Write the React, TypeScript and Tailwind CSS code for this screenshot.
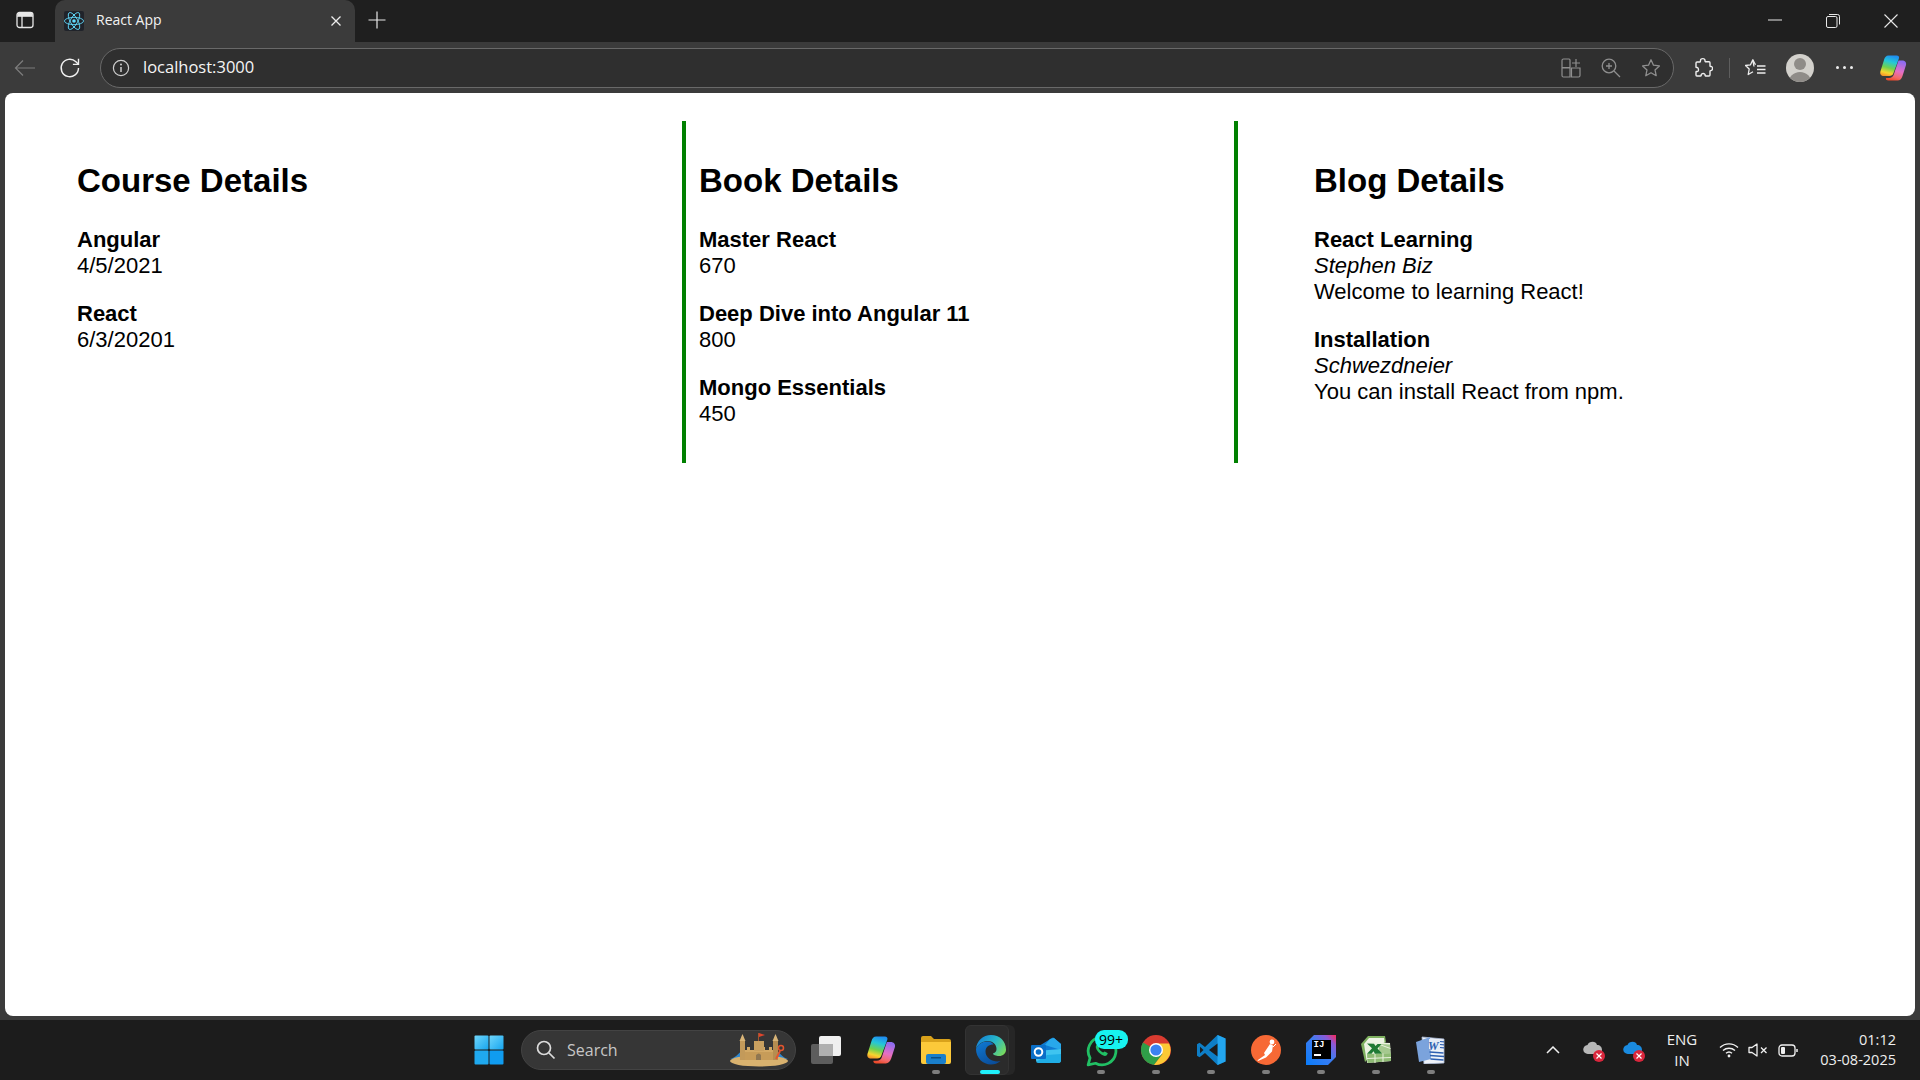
import React from "react";

const Chrome = ({ children, className = "" }: { children?: React.ReactNode; className?: string }) => (
  <div className={`flex items-center justify-center shrink-0 ${className}`}>{children}</div>
);

const ReactLogo = () => (
  <div className="w-[20px] h-[20px] bg-[#20232a] rounded-[2px] flex items-center justify-center">
    <svg width="20" height="20" viewBox="-11.5 -11.5 23 23" fill="none" stroke="#61dafb" strokeWidth="1">
      <circle r="2.05" fill="#61dafb" stroke="none" />
      <ellipse rx="11" ry="4.2" />
      <ellipse rx="11" ry="4.2" transform="rotate(60)" />
      <ellipse rx="11" ry="4.2" transform="rotate(120)" />
    </svg>
  </div>
);

const CopilotIcon = ({ size = 28, id }: { size?: number; id: string }) => (
  <svg width={size} height={size} viewBox="0 0 28 28">
    <defs>
      <linearGradient id={`${id}A`} x1="0.6" y1="0" x2="0.35" y2="1">
        <stop offset="0" stopColor="#1f8ff0" />
        <stop offset="0.3" stopColor="#25c7d8" />
        <stop offset="0.6" stopColor="#6fd24e" />
        <stop offset="0.85" stopColor="#f6d52f" />
        <stop offset="1" stopColor="#f79a2a" />
      </linearGradient>
      <linearGradient id={`${id}B`} x1="0.6" y1="0" x2="0.3" y2="1">
        <stop offset="0" stopColor="#8d6cf0" />
        <stop offset="0.5" stopColor="#e56fc4" />
        <stop offset="0.8" stopColor="#f26a6a" />
        <stop offset="1" stopColor="#ee4a2a" />
      </linearGradient>
    </defs>
    <path d="M9.500 1.500h8c2 0 3 1.300 2.400 3L14.500 19c-.8 2.300-2 3-4 3H5c-3 0-4.300-2-3.600-4.500L5 6c.8-3 2.200-4.500 4.500-4.500z" fill={`url(#${id}A)`} />
    <path d="M19.500 6.500H23c3 0 4.700 2 4 4.600L23.500 22c-1 3-2.600 4.500-5 4.500H9.500c-2 0-3-1.200-2.500-2.500h3c2.500 0 4-1.200 4.800-3.500z" fill={`url(#${id}B)`} />
  </svg>
);

const StarPath = "M10 1.800l2.500 5.400 5.900.7-4.400 4 1.200 5.800L10 14.800l-5.200 2.900L6 11.900l-4.400-4 5.900-.7z";

const TabBar = () => (
  <div className="h-[42px] bg-[#1f1f1f] flex items-stretch shrink-0">
    <Chrome className="w-[55px] pr-[6px] pb-[2px]">
      <svg width="18" height="18" viewBox="0 0 18 18" fill="none" stroke="#e8e8e8" strokeWidth="1.300">
        <rect x="1" y="1.500" width="16" height="15" rx="2.500" />
        <path d="M1 5.200h16M6 5.200v11.300" />
        <path d="M1.500 3.500q0-1.800 2-1.800h11q2 0 2 1.800v1.700h-15z" fill="#e8e8e8" stroke="none" />
      </svg>
    </Chrome>
    <div className="w-[300px] bg-[#3b3b3b] rounded-t-[10px] flex items-center pl-[9px] pr-[13px]">
      <ReactLogo />
      <span className="ml-[12px] text-[14px] leading-[20px] text-[#f2f2f2] flex-1 font-['Open_Sans',sans-serif] pb-[2px]">React App</span>
      <svg width="12" height="12" viewBox="0 0 12 12" stroke="#ededed" strokeWidth="1.300">
        <path d="M1.500 1.500l9 9M10.500 1.500l-9 9" />
      </svg>
    </div>
    <Chrome className="w-[44px] pb-[2px]">
      <svg width="18" height="18" viewBox="0 0 18 18" stroke="#e8e8e8" strokeWidth="1.200">
        <path d="M9 0.500v17M0.500 9h17" />
      </svg>
    </Chrome>
    <div className="flex-1" />
    <Chrome className="w-[58px] pb-[2px]">
      <svg width="14" height="2" viewBox="0 0 14 2"><path d="M0 1h14" stroke="#e8e8e8" strokeWidth="1" /></svg>
    </Chrome>
    <Chrome className="w-[58px]">
      <svg width="14" height="14" viewBox="0 0 14 14" fill="none" stroke="#e8e8e8" strokeWidth="1">
        <rect x="0.500" y="2.500" width="10.500" height="11" rx="1.500" />
        <path d="M3 .5h8.500q2 0 2 2v8" />
      </svg>
    </Chrome>
    <Chrome className="w-[58px]">
      <svg width="14" height="14" viewBox="0 0 14 14" stroke="#e8e8e8" strokeWidth="1.100">
        <path d="M.5.5l13 13M13.500.5l-13 13" />
      </svg>
    </Chrome>
  </div>
);

const Toolbar = () => (
  <div className="h-[51px] bg-[#3b3b3b] flex items-center shrink-0">
    <Chrome className="w-[49px]">
      <svg width="22" height="18" viewBox="0 0 22 18" fill="none" stroke="#7d7d7d" strokeWidth="1.200">
        <path d="M21 9H1.500M9 1.500L1.500 9 9 16.500" />
      </svg>
    </Chrome>
    <Chrome className="w-[42px]">
      <svg width="22" height="22" viewBox="0 0 22 22" fill="none" stroke="#f0f0f0" strokeWidth="1.400">
        <path d="M19.500 11a8.700 8.700 0 1 1-2.600-6.200l2.300 2.300" />
        <path d="M19.500 1.800v5.600h-5.600" />
      </svg>
    </Chrome>
    <div className="ml-[9px] w-[1574px] h-[40px] bg-[#2f2f2f] border border-[#696969] rounded-full flex items-center pl-[11px] pr-[12px]">
      <svg width="18" height="18" viewBox="0 0 18 18" fill="none" stroke="#cfcfcf" strokeWidth="1.200">
        <circle cx="9" cy="9" r="7.600" />
        <path d="M9 8v5" strokeWidth="1.500" />
        <circle cx="9" cy="5.400" r="1" fill="#cfcfcf" stroke="none" />
      </svg>
      <span className="ml-[13px] text-[16.500px] text-[#f5f5f5] flex-1 font-['Open_Sans',sans-serif]">localhost:3000</span>
      <div className="flex items-center gap-[20px]">
        <svg width="20" height="20" viewBox="0 0 20 20" fill="none" stroke="#8f8f8f" strokeWidth="1.200">
          <path d="M1 2.500q0-1.500 1.500-1.500H8q1 0 1 1v7.500H1zM1 10h8v9H2.500Q1 19 1 17.500zM10.500 10H19v7.500q0 1.500-1.500 1.500h-7z" />
          <path d="M15 1v8M11 5h8" />
        </svg>
        <svg width="20" height="20" viewBox="0 0 20 20" fill="none" stroke="#8f8f8f" strokeWidth="1.300">
          <circle cx="8" cy="8" r="6.800" />
          <path d="M13 13l6 6M8 5v6M5 8h6" />
        </svg>
        <svg width="20" height="20" viewBox="0 0 20 20" fill="none" stroke="#8f8f8f" strokeWidth="1.300">
          <path d={StarPath} strokeLinejoin="round" />
        </svg>
      </div>
    </div>
    <Chrome className="w-[55px] pl-[3px]">
      <svg width="20" height="21" viewBox="0 0 20 21" fill="none" stroke="#eeeeee" strokeWidth="1.400" strokeLinejoin="round">
        <path d="M7.500 3.500C7.500 1 12 1 12 3.500c0 .6 0 1 .3 1.200H16c.6 0 1 .4 1 1v3.200c0 .4.4.6.8.5 2-.5 2.600 4.400-.1 4.200-.4 0-.7.2-.7.6V18c0 .6-.4 1-1 1h-3.400c-.4 0-.6-.4-.5-.8.5-2.200-4.400-2.200-3.900 0 .1.4-.1.8-.5.8H3.800c-.6 0-.8-.4-.8-1v-3c0-.5.5-.7.9-.5C6 15.400 6 10 3.800 10.500c-.4.100-.8 0-.8-.5V6c0-.6.4-1 1-1h3c.4 0 .5-.8.5-1.500z" />
      </svg>
    </Chrome>
    <div className="w-px h-[20px] bg-[#5e5e5e]" />
    <Chrome className="w-[51px]">
      <svg width="21" height="20" viewBox="0 0 21 20" fill="none" stroke="#eeeeee" strokeWidth="1.300">
        <path d="M9 8.500L7.800 1.800 5.500 6.800l-5 .7 3.700 3.500-1 5.500 4.800-2.700" strokeLinejoin="round" />
        <path d="M7.800 1.800l2.700 5" />
        <path d="M12 8h8.500M12 11.500h8.500M12 15h8.500" />
      </svg>
    </Chrome>
    <Chrome className="w-[38px]">
      <div className="w-[28px] h-[28px] rounded-full bg-[#d3d1cc] overflow-hidden flex flex-col items-center">
        <div className="w-[12px] h-[12px] rounded-full bg-[#8f8c88] mt-[4px] shrink-0" />
        <div className="w-[24px] h-[14px] rounded-t-full bg-[#8f8c88] mt-[2px] shrink-0" />
      </div>
    </Chrome>
    <Chrome className="w-[50px]">
      <div className="flex gap-[4px]">
        <div className="w-[3px] h-[3px] rounded-full bg-[#ececec]" />
        <div className="w-[3px] h-[3px] rounded-full bg-[#ececec]" />
        <div className="w-[3px] h-[3px] rounded-full bg-[#ececec]" />
      </div>
    </Chrome>
    <Chrome className="w-[47px]">
      <CopilotIcon size={28} id="cpTop" />
    </Chrome>
  </div>
);

const Entry = ({ lines }: { lines: { t: string; k?: "b" | "i" }[] }) => (
  <div className="mb-[22px]">
    {lines.map((l) => (
      <div
        key={l.t}
        className={`h-[26px] leading-[26px] ${l.k === "b" ? "font-bold" : ""} ${l.k === "i" ? "italic" : ""}`}
      >
        {l.t}
      </div>
    ))}
  </div>
);

const Heading = ({ children }: { children: React.ReactNode }) => (
  <h2 className="text-[33px] font-bold leading-[39px] mt-[40px] mb-[27px]">{children}</h2>
);

const Content = () => (
  <div className="flex-1 bg-[#3b3b3b] px-[5px] pb-[4px] min-h-0">
    <div className="h-full bg-white rounded-[8px] text-black flex items-start pt-[28px] font-['Liberation_Sans',Arial,sans-serif] text-[22px]">
      <section className="w-[677px] pl-[72px]">
        <Heading>Course Details</Heading>
        <Entry lines={[{ t: "Angular", k: "b" }, { t: "4/5/2021" }]} />
        <Entry lines={[{ t: "React", k: "b" }, { t: "6/3/20201" }]} />
      </section>
      <section className="w-[556px] h-[342px] border-x-4 border-[#008000] pl-[13px]">
        <Heading>Book Details</Heading>
        <Entry lines={[{ t: "Master React", k: "b" }, { t: "670" }]} />
        <Entry lines={[{ t: "Deep Dive into Angular 11", k: "b" }, { t: "800" }]} />
        <Entry lines={[{ t: "Mongo Essentials", k: "b" }, { t: "450" }]} />
      </section>
      <section className="pl-[76px]">
        <Heading>Blog Details</Heading>
        <Entry lines={[{ t: "React Learning", k: "b" }, { t: "Stephen Biz", k: "i" }, { t: "Welcome to learning React!" }]} />
        <Entry lines={[{ t: "Installation", k: "b" }, { t: "Schwezdneier", k: "i" }, { t: "You can install React from npm." }]} />
      </section>
    </div>
  </div>
);

const WindowsLogo = () => (
  <svg width="30" height="30" viewBox="0 0 30 30">
    <defs>
      <linearGradient id="winA" x1="0" y1="0" x2="1" y2="1">
        <stop offset="0" stopColor="#6fd6fb" />
        <stop offset="1" stopColor="#17a5ef" />
      </linearGradient>
    </defs>
    <rect x="0.500" y="0.500" width="14" height="14" rx="1" fill="url(#winA)" />
    <rect x="15.500" y="0.500" width="14" height="14" rx="1" fill="url(#winA)" />
    <rect x="0.500" y="15.500" width="14" height="14" rx="1" fill="#1fa9ef" />
    <rect x="15.500" y="15.500" width="14" height="14" rx="1" fill="#109cf0" />
  </svg>
);

const Castle = () => (
  <svg width="60" height="34" viewBox="0 0 60 34">
    <path d="M1 26c6-1 8-6 12-8v10z" fill="#2f88d0" />
    <path d="M59 26c-5-1-7-5-11-8v10z" fill="#2f88d0" />
    <ellipse cx="30" cy="28" rx="29" ry="5.500" fill="#d9b26f" />
    <rect x="15" y="17" width="32" height="10" fill="#c79c59" />
    <path d="M15 17h3v-3h3v3h4v-3h3v3h5v-3h3v3h4v-3h3v3h4v2H15z" fill="#d3a965" />
    <rect x="11" y="7" width="5" height="20" fill="#c39a5a" />
    <path d="M13.500 1l3 7h-6z" fill="#d8b477" />
    <rect x="44" y="7" width="5" height="20" fill="#b68d50" />
    <path d="M46.500 1l3 7h-6z" fill="#d8b477" />
    <rect x="25" y="8" width="10" height="10" fill="#c9a060" />
    <path d="M29.500 8V0" stroke="#a3552f" strokeWidth="1" />
    <path d="M30 0l6 2-6 2z" fill="#e0452c" />
    <path d="M27 27v-5q3-3 5 0v5z" fill="#8f7651" />
    <path d="M47 26l4-8" stroke="#e4552e" strokeWidth="2" />
    <circle cx="52" cy="15" r="2.500" fill="none" stroke="#e4552e" strokeWidth="1.500" />
  </svg>
);

const SearchBox = () => (
  <div className="ml-[17px] w-[275px] h-[40px] rounded-full bg-[#363636] border border-[#434343] flex items-center pl-[14px] pr-[6px] mr-[2px]">
    <svg width="20" height="20" viewBox="0 0 20 20" fill="none" stroke="#dcdcdc" strokeWidth="1.700">
      <circle cx="8" cy="8" r="6.500" />
      <path d="M13 13l5.500 5.500" />
    </svg>
    <span className="ml-[11px] text-[16px] text-[#c6c6c6] flex-1 font-['Open_Sans',sans-serif]">Search</span>
    <Castle />
  </div>
);

const TaskViewIcon = () => (
  <div className="relative w-[30px] h-[28px]">
    <div className="absolute left-0 bottom-0 w-[22px] h-[20px] bg-[#5d5d5d] rounded-[2px]" />
    <div className="absolute right-0 top-0 w-[22px] h-[20px] bg-[#f0f0f0] rounded-[2px]" />
    <div className="absolute left-[8px] top-[8px] w-[14px] h-[12px] bg-[#b0b0b0]" />
  </div>
);

const FolderIcon = () => (
  <svg width="30" height="28" viewBox="0 0 30 28">
    <path d="M0 2q0-2 2-2h8l3 3h15q2 0 2 2v4H0z" fill="#d9a21b" />
    <path d="M0 6h30v20q0 2-2 2H2q-2 0-2-2z" fill="#fcc93a" />
    <rect x="5" y="18" width="20" height="10" rx="2" fill="#1a7fcb" />
    <rect x="10" y="21" width="10" height="1.500" fill="#0c4f86" />
  </svg>
);

const EdgeIcon = () => (
  <svg width="30" height="30" viewBox="0 0 30 30">
    <defs>
      <linearGradient id="edA" x1="0" y1="0.300" x2="1" y2="0.800">
        <stop offset="0" stopColor="#1583d6" />
        <stop offset="0.5" stopColor="#27b7c8" />
        <stop offset="1" stopColor="#7cdb58" />
      </linearGradient>
      <linearGradient id="edB" x1="0.200" y1="0" x2="0.700" y2="1">
        <stop offset="0" stopColor="#0f77cf" />
        <stop offset="1" stopColor="#0a4d9a" />
      </linearGradient>
    </defs>
    <path d="M15 0c8.500 0 15 6 15 14.500 0 4-3 6.500-7 6.500-3 0-6-1-6-2.500 2.500-1 3.500-2.500 3.500-4.500 0-5-4-8-9-8C6 6 1.500 10 0 14 .5 6 7 0 15 0z" fill="url(#edA)" />
    <path d="M0 14c1.500-4 6-7.500 11.500-7.500 3 0 5.500 1.500 6 3-4.500 0-8 2.500-8 7 0 6 6 10 12 10 1 0 2-.2 3-.5-2.800 2.500-6 3.500-9.500 3.500C7 29.500 0 23 0 14z" fill="url(#edB)" />
  </svg>
);

const OutlookIcon = () => (
  <svg width="30" height="27" viewBox="0 0 30 27">
    <path d="M8 9L21 1q1-1 2 0l7 6v15H8z" fill="#0f7bd1" />
    <path d="M19 2l4-1 7 6v6L14 8z" fill="#28a8ea" />
    <path d="M5 14l25-2v11q0 3-3 3H9q-4 0-4-3z" fill="#3fc4f0" />
    <path d="M5 25l11-7 14-1v6q0 3-3 3H9q-3 0-4-1z" fill="#20aee6" />
    <rect x="0" y="8" width="15" height="14" rx="1" fill="#0a6fc8" />
    <circle cx="7.500" cy="15" r="3.800" fill="none" stroke="#fff" strokeWidth="2" />
  </svg>
);

const WhatsappIcon = () => (
  <div className="relative w-[30px] h-[30px]">
    <svg width="32" height="32" viewBox="0 0 30 30" fill="none" stroke="#21c064" strokeWidth="2.600">
      <path d="M2 28l1.800-6.500A13 13 0 1 1 9 26.500z" strokeLinejoin="round" />
      <path d="M10 9c-1.500 1.500-1 4 1.500 7 3 3 6 4.500 8 3l1-2-3-1.500-1.500 1c-1.500-.5-3.500-2.500-4-4l1-1.500L11.500 8z" fill="#21c064" stroke="none" />
    </svg>
    <div className="absolute left-[9px] top-[-5px] h-[19px] w-[33px] rounded-[9px] bg-[#17f3f0] text-black text-[14px] leading-[19px] text-center font-['Open_Sans',sans-serif]">
      99+
    </div>
  </div>
);

const ChromeIcon = () => (
  <svg width="30" height="30" viewBox="0 0 30 30">
    <circle cx="15" cy="15" r="15" fill="#d93b30" />
    <path d="M15 15L2 7.500A15 15 0 0 0 13 29.900l8.500-11z" fill="#2f9e48" />
    <path d="M15 8.500h13A15 15 0 0 1 13 29.900l8.500-11z" fill="#fcc934" />
    <circle cx="15" cy="15" r="7" fill="#fff" />
    <circle cx="15" cy="15" r="5.600" fill="#3b82f1" />
  </svg>
);

const VSCodeIcon = () => (
  <svg width="30" height="30" viewBox="0 0 30 30">
    <path d="M29.500 3.500L21.500 0 9 12 3.500 7.800 1 9.200v11.600l2.500 1.400L9 18l12.500 12 8-3.500z" fill="#0e7ec6" />
    <path d="M21.500 0l8 3.500v23l-8 3.500z" fill="#23a6ef" />
    <path d="M21.500 8.500L13 15l8.500 6.500z" fill="#1c1c1c" />
    <path d="M4 11.800V18.200L7.500 15z" fill="#1c1c1c" />
  </svg>
);

const PostmanIcon = () => (
  <svg width="30" height="30" viewBox="0 0 30 30">
    <circle cx="15" cy="15" r="15" fill="#f76935" />
    <circle cx="21" cy="7" r="2.400" fill="#fff" />
    <path d="M19 9l3 1.500-1 6-6 6-8 3.500-.5-.7L14 20l-1-2z" fill="#fff" />
    <path d="M22 12l3-3" stroke="#fff" strokeWidth="1" />
  </svg>
);

const IntellijIcon = () => (
  <div className="relative w-[30px] h-[30px]">
    <svg width="30" height="30" viewBox="0 0 30 30" className="absolute left-0 top-0">
      <defs>
        <linearGradient id="ijA" x1="0" y1="1" x2="1" y2="0">
          <stop offset="0" stopColor="#087cfa" />
          <stop offset="0.55" stopColor="#3f7cf0" />
          <stop offset="0.8" stopColor="#8a5ad8" />
          <stop offset="1" stopColor="#fe2857" />
        </linearGradient>
      </defs>
      <path d="M8 0h22v22l-8 8H0V8z" fill="url(#ijA)" />
    </svg>
    <div className="absolute left-[6px] top-[5px] w-[19px] h-[19px] bg-black text-white text-[9px] font-bold leading-[11px] pl-[2px] font-['Liberation_Mono',monospace]">
      IJ
      <div className="w-[7px] h-[2px] bg-white mt-[3px]" />
    </div>
  </div>
);

const ExcelIcon = () => (
  <svg width="30" height="28" viewBox="0 0 30 28">
    <path d="M0 8L7 0h17l1 6-21 20z" fill="#7eb05f" />
    <path d="M3 8L8 2h15l.5 4-18 18z" fill="#eef4e6" />
    <path d="M5 6l24 1 1 18-24 2z" fill="#eaf2df" />
    <path d="M6 18l24-1 .5 8-24 2z" fill="#8fbb75" />
    <path d="M18 8l11 .500.500 9-11.500.500z" fill="#a5c98f" />
    <path d="M14 18v9M22 17.500v8.500M6 22.500l24-1M18.500 8.500l11 4" stroke="#eaf2df" strokeWidth="1" fill="none" />
    <path d="M6 7.500l7 .3 1.500 2.200 2-2h4l-4 4.500 4.500 5-7 .3-1.500-2.500-2 2.500H6l5-5.500z" fill="#1f7a34" />
  </svg>
);

const WordIcon = () => (
  <svg width="30" height="28" viewBox="0 0 30 28">
    <path d="M6 1l22 2v24L8 28z" fill="#eef2f8" stroke="#aab9d4" strokeWidth="0.800" />
    <path d="M0 6l14-5 1 22L3 26z" fill="#7ba3dc" />
    <path d="M13 3l13 1v10l-13-1z" fill="#e4ebf6" />
    <path d="M13.500 16l14 1M14 19.500l14 1M14.500 23l13 1" stroke="#2d5fb1" strokeWidth="1.500" />
    <path d="M24 5.500l4 .3M24 8.500l4 .3M24 11.500l4 .3" stroke="#2d5fb1" strokeWidth="1.200" />
    <text x="12" y="14" fontSize="12" fontWeight="bold" fill="#2d5fb1" fontFamily="Liberation Serif" fontStyle="italic">W</text>
  </svg>
);

const Pip = () => <div className="absolute bottom-[6px] left-1/2 -ml-[4px] w-[8px] h-[4px] rounded-full bg-[#7e7e7e]" />;

const Slot = ({ children, pip = true }: { children: React.ReactNode; pip?: boolean }) => (
  <div className="relative w-[55px] h-[60px] flex items-center justify-center shrink-0">
    {children}
    {pip && <Pip />}
  </div>
);

const CloudX = ({ color, className = "" }: { color: string; className?: string }) => (
  <div className={`relative w-[20px] h-[18px] ${className}`}>
    <svg width="20" height="14" viewBox="0 0 20 14" className="absolute left-0 top-0">
      <path d="M5 13a4.500 4.500 0 0 1-.5-9C6 0 13-.5 14 4c3 0 5 2 5 5s-2 4-4 4z" fill={color} />
    </svg>
    <div className="absolute right-[-2px] bottom-[-3px] w-[12px] h-[12px] rounded-full bg-[#d9263c] flex items-center justify-center">
      <svg width="6" height="6" viewBox="0 0 6 6" stroke="#fff" strokeWidth="1.200"><path d="M.5.5l5 5M5.500.5l-5 5" /></svg>
    </div>
  </div>
);

const Tray = () => (
  <div className="flex items-center h-full font-['Open_Sans',sans-serif] text-white">
    <svg width="14" height="8" viewBox="0 0 14 8" fill="none" stroke="#f0f0f0" strokeWidth="1.500">
      <path d="M1 7l6-6 6 6" />
    </svg>
    <CloudX color="#b8b8b8" className="ml-[23px]" />
    <CloudX color="#1a8be0" className="ml-[20px]" />
    <div className="ml-[19px] w-[40px] text-center text-[15px] leading-[21px] text-[#eeeeee]">
      <div>ENG</div>
      <div>IN</div>
    </div>
    <svg width="20" height="16" viewBox="0 0 20 16" fill="none" stroke="#f0f0f0" strokeWidth="1.400" className="ml-[17px]">
      <path d="M1 5.500a13 13 0 0 1 18 0M4 8.500a9 9 0 0 1 12 0M7 11.300a4.500 4.500 0 0 1 6 0" />
      <circle cx="10" cy="14" r="1.400" fill="#f0f0f0" stroke="none" />
    </svg>
    <svg width="20" height="14" viewBox="0 0 20 14" fill="none" stroke="#f0f0f0" strokeWidth="1.300" className="ml-[9px]">
      <path d="M1 4.500h3L9 1v12L4 9.500H1z" strokeLinejoin="round" />
      <path d="M13 4.500l5.500 5.500M18.500 4.500L13 10" />
    </svg>
    <svg width="20" height="13" viewBox="0 0 20 13" fill="none" stroke="#f0f0f0" strokeWidth="1.300" className="ml-[10px]">
      <rect x="1" y="1" width="16" height="11" rx="3" />
      <rect x="3" y="3" width="4" height="7" rx="1" fill="#f0f0f0" stroke="none" />
      <path d="M19 5v3" strokeWidth="1.500" />
    </svg>
    <div className="ml-[8px] w-[90px] text-right text-[14.500px] leading-[20px] text-[#eeeeee] mr-[24px]">
      <div>01:12</div>
      <div>03-08-2025</div>
    </div>
  </div>
);

const Taskbar = () => (
  <div className="h-[60px] bg-[#1c1c1c] flex items-center shrink-0">
    <div className="w-[474px]" />
    <div className="flex items-center h-full">
      <div className="w-[30px] flex items-center justify-center">
        <WindowsLogo />
      </div>
      <SearchBox />
      <Slot pip={false}><TaskViewIcon /></Slot>
      <Slot pip={false}><CopilotIcon size={30} id="cpTask" /></Slot>
      <Slot><FolderIcon /></Slot>
      <div className="relative w-[55px] h-[60px] flex items-center justify-center shrink-0">
        <div className="absolute left-[8px] top-[5px] w-[44px] h-[50px] rounded-[6px] bg-[#262626]" />
        <div className="absolute left-[2px] top-[5px] w-[44px] h-[50px] rounded-[6px] bg-[#2b2b2b] border border-[#333333]" />
        <div className="relative"><EdgeIcon /></div>
        <div className="absolute bottom-[6px] left-[17px] w-[20px] h-[4px] rounded-full bg-[#1ff0fa]" />
      </div>
      <Slot pip={false}><OutlookIcon /></Slot>
      <Slot><WhatsappIcon /></Slot>
      <Slot><ChromeIcon /></Slot>
      <Slot><VSCodeIcon /></Slot>
      <Slot><PostmanIcon /></Slot>
      <Slot><IntellijIcon /></Slot>
      <Slot><ExcelIcon /></Slot>
      <Slot><WordIcon /></Slot>
    </div>
    <div className="flex-1" />
    <Tray />
  </div>
);

export default function App() {
  return (
    <div className="w-[1920px] h-[1080px] flex flex-col overflow-hidden bg-[#1c1c1c]">
      <TabBar />
      <Toolbar />
      <Content />
      <Taskbar />
    </div>
  );
}
